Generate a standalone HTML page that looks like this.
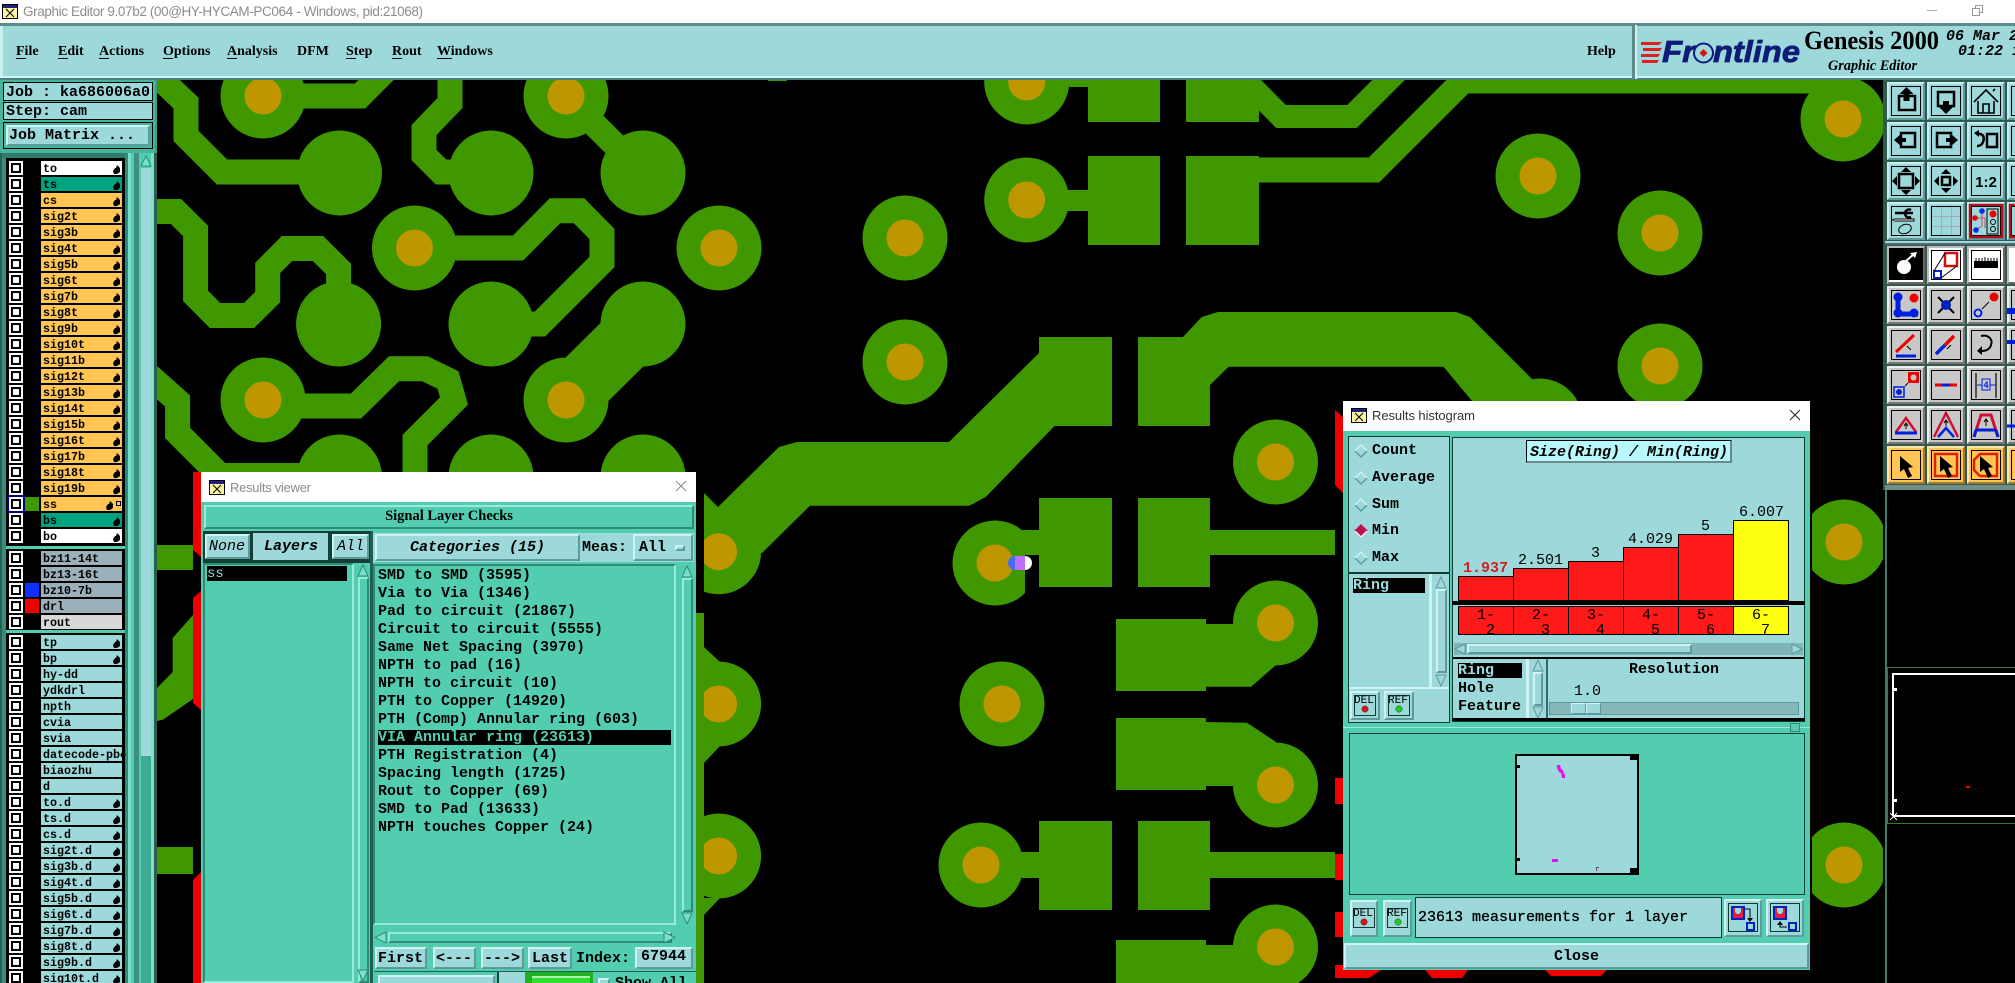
<!DOCTYPE html>
<html><head><meta charset="utf-8"><title>Graphic Editor</title>
<style>
html,body{margin:0;padding:0;background:#000;width:2015px;height:983px;overflow:hidden}
#r{position:relative;width:2015px;height:983px;overflow:hidden}
svg{position:absolute;left:0;top:0}
.a{position:absolute;box-sizing:border-box}
.t{position:absolute;white-space:pre;font:bold 15px/18px "Liberation Mono",monospace;color:#000;margin-top:1px}
.n{font-weight:normal}
.i{font-style:italic}
.bl{background:#9dd9da;border:2px solid;border-color:#cdf3f3 #5e9a9b #5e9a9b #cdf3f3}
.bt{background:#53cdaf;border:2px solid;border-color:#96ecd8 #2f8a76 #2f8a76 #96ecd8}
.sk{background:#53cdaf;border:2px solid;border-color:#2f8a76 #96ecd8 #96ecd8 #2f8a76}
.fl{background:#9dd9da}
.w{background:#fff}
.s{position:absolute;white-space:pre;font:bold 14.5px/18px "Liberation Serif",serif;color:#000}
svg text{white-space:pre}
.m{font:bold 11.67px "Liberation Mono",monospace;fill:#000}
.o{fill:#ffc655}.g{fill:#00a37f}.e{fill:#fff}.z{fill:#9cb0ba}.c{fill:#9dd9da}.q{fill:#d8d8d8}
.p{fill:#409800}.h{fill:#be9600}.r{fill:#ee0000}
.l{fill:none;stroke:#409800;stroke-linejoin:miter}
</style></head><body><div id="r">
<svg width="2015" height="983" viewBox="0 0 2015 983" xmlns="http://www.w3.org/2000/svg">
<defs>
<clipPath id="cv"><rect x="157" y="80" width="1726" height="903"/></clipPath>
<g id="v"><circle r="42.5" class="p"/><circle r="18.5" class="h"/></g>
<g id="cb"><rect x="9" width="14" height="14" fill="#fff"/><rect x="11" y="2" width="10" height="10" fill="#000"/><rect x="13" y="4" width="6" height="6" fill="#fff"/></g>
<path id="hd" d="M113 10l2-3h1l1-3 3 3v4l-3 2h-3z" fill="#000"/>
<g id="tb"><rect width="38" height="38" fill="#9dd9da"/><path d="M0 38V0h38l-2 2H2v34z" fill="#c9f0f0"/><path d="M38 0v38H0l2-2h34V2z" fill="#5e9a9b"/><rect x="4.5" y="4.5" width="29" height="29" fill="none" stroke="#000"/></g>
<g id="tg"><rect width="38" height="38" fill="#c8c8c8"/><path d="M0 38V0h38l-2 2H2v34z" fill="#eee"/><path d="M38 0v38H0l2-2h34V2z" fill="#777"/><rect x="4.5" y="4.5" width="29" height="29" fill="none" stroke="#000"/></g>
<g id="tw"><rect width="38" height="38" fill="#fff"/><path d="M38 0v38H0l2-2h34V2z" fill="#666"/><path d="M0 38V0h38l-2 2H2v34z" fill="#bbb"/><rect x="4" y="4" width="30" height="30" fill="#fff"/></g>
<g id="ty"><rect width="38" height="38" fill="#ffc655"/><path d="M0 38V0h38l-2 2H2v34z" fill="#ffe7a8"/><path d="M38 0v38H0l2-2h34V2z" fill="#a07a30"/><rect x="4.5" y="4.5" width="29" height="29" fill="none" stroke="#000"/></g>
<path id="ar" d="M13 10v16l4-3 4 9 4-2-4-8 5-1z" fill="#000"/>
</defs>
<rect width="2015" height="983" fill="#000"/>
<rect width="2015" height="23" fill="#fff"/>
<!-- PCB -->
<g clip-path="url(#cv)">
<g class="l" stroke-width="25">
<path d="M150 69L186 103V136L222 172H340"/>
<path d="M263 96H360L388 68"/>
<path d="M450 70V103L424 130V155L441 172H491"/>
<path d="M566 96L643 173"/>
<path d="M150 211.5H176L195.6 231V296L215 315.5H249L267.7 297V268L287 248.5H318L338.6 269V320"/>
<path d="M414 248H518L555 210.7H579L602 234V262L540 324H491"/>
<path d="M566 400L643 324" stroke-width="61"/>
<path d="M263 406H356L394 368.7H425L448 380L454 401L415 440V480"/>
<path d="M145 372L177.6 401V433L220 475.5H340"/>
<path d="M1240 75L1281 116.5H1352L1405 63.5" stroke-width="23"/>
<path d="M1259 170H1374L1463 81H1835L1843 119"/>
</g>
<g class="p">
<rect x="1088" y="60" width="72" height="62"/><rect x="1186" y="60" width="73" height="62"/>
<rect x="1088" y="156" width="72" height="89"/><rect x="1186" y="156" width="73" height="89"/>
<rect x="1039" y="337" width="73" height="89"/><rect x="1138" y="337" width="72" height="89"/>
<rect x="1039" y="498" width="73" height="89"/><rect x="1138" y="498" width="72" height="89"/>
<rect x="1116" y="619" width="90" height="72"/><rect x="1116" y="718" width="90" height="72"/>
<rect x="1039" y="821" width="73" height="89"/><rect x="1138" y="821" width="72" height="89"/>
<rect x="1116" y="940" width="90" height="60"/>
<rect x="1026" y="190" width="62" height="21"/><rect x="1026" y="60" width="62" height="27"/>
<rect x="1000" y="530" width="39" height="25"/><rect x="1210" y="530" width="125" height="25"/>
<rect x="981" y="852" width="60" height="26"/><rect x="1210" y="852" width="125" height="26"/>
<rect x="1206" y="945" width="50" height="40"/>
<polygon points="1206,624 1260,624 1276,665 1251,686.7 1206,686.7"/>
<polygon points="1206,722 1247,722.7 1276,742 1276,786 1206,786"/>
<polygon points="1039,353 949,442 797,442 779,447 718,507 704,493 700,560 762,553 810,505.7 969.5,505.7 986,496.7 1054.5,426 1112,426 1112,337 1039,337"/>
<polygon points="1183,337 1201.7,317 1218,312 1456,312 1470,317 1560,407 1477,407 1443.5,366.7 1228.6,366.7 1210,385"/>
<polygon points="704,647 720,662 720,746 704,763"/>
<polygon points="704,898 720,898 704,915"/>
<rect x="157" y="545" width="36" height="25"/>
<polygon points="157,688 172.7,672 172.7,638 193,615 193,699 163,719.6 157,721"/>
<rect x="157" y="847" width="36" height="27"/>
<rect x="768" y="80" width="19" height="1"/>
</g>
<use href="#v" x="263" y="96"/><use href="#v" x="566" y="96"/><use href="#v" x="414.5" y="248"/><use href="#v" x="719" y="248"/><use href="#v" x="263" y="400"/><use href="#v" x="566" y="400"/>
<use href="#v" x="1026.7" y="82"/><use href="#v" x="1026.7" y="200"/><use href="#v" x="905" y="238"/><use href="#v" x="905" y="362"/><use href="#v" x="718.6" y="551.7"/><use href="#v" x="995" y="563"/>
<use href="#v" x="1275.5" y="462"/><use href="#v" x="1275.5" y="623"/><use href="#v" x="1002" y="704"/><use href="#v" x="1275.5" y="785"/><use href="#v" x="981" y="865"/><use href="#v" x="718.6" y="704"/><use href="#v" x="718.6" y="856"/><use href="#v" x="1275.5" y="947"/>
<use href="#v" x="1843" y="119"/><use href="#v" x="1538" y="176"/><use href="#v" x="1660" y="233"/><use href="#v" x="1660" y="366"/><use href="#v" x="1844" y="542"/><use href="#v" x="1844" y="865"/><use href="#v" x="1540" y="421"/>
<g class="p">
<circle cx="339.5" cy="173" r="42.5"/><circle cx="491" cy="173" r="42.5"/><circle cx="643" cy="173" r="42.5"/>
<circle cx="338.6" cy="324" r="42.5"/><circle cx="491" cy="324" r="42.5"/><circle cx="643" cy="324" r="42.5"/>
<circle cx="339.5" cy="477" r="42.5"/><circle cx="491" cy="477" r="42.5"/><circle cx="643" cy="477" r="42.5"/>
</g>
<rect x="1025" y="555" width="14" height="55" fill="#000"/>
<path d="M1015 556a7 7 0 0 0 0 14z" fill="#4a6cf0"/><rect x="1015" y="556" width="10" height="14" fill="#bf6fff"/><path d="M1025 556a7 7 0 0 1 0 14z" fill="#fff"/>
<rect x="193" y="472" width="8" height="511" fill="#000"/>
<path d="M193 472h8v85l-8-7zM193 598l8-7v119l-8-7zM193 880l8-8v111h-8z" class="r"/>
<rect x="696" y="472" width="8" height="141" fill="#000"/><rect x="696" y="613" width="8" height="370" class="p"/>
<rect x="1335" y="400" width="8" height="583" fill="#000"/>
<path d="M1335 410l8 7v76l-8-8zM1335 778h8v26h-8zM1335 854h8v26h-8zM1335 912h8v25h-8zM1335 965h8v13h-8z" class="r"/>
<path d="M1343 970h38l-12 8h-26zM1425 970h43l-6 8h-30zM1545 970h62l-6 6h-50z" class="r"/>
<rect x="1810" y="400" width="2" height="583" fill="#000"/>
</g>
<!-- Left panel -->
<rect y="79" width="157" height="904" fill="#3f9c88"/>
<rect y="79" width="155" height="74" fill="#45b69c"/>
<rect y="153" width="155" height="5" fill="#2f7a6a"/>
<rect x="0" y="153" width="2" height="830" fill="#2c5f55"/>
<rect x="2" y="158" width="4" height="825" fill="#3e8a78"/>
<rect x="125" y="153" width="3" height="830" fill="#2f8a76"/>
<rect x="128" y="153" width="3" height="830" fill="#79e0cc"/>
<rect x="131" y="153" width="3" height="830" fill="#53cdaf"/>
<rect x="134" y="153" width="5" height="830" fill="#3f8f80"/>
<rect x="139" y="153" width="2" height="830" fill="#53cdaf"/>
<rect x="141" y="153" width="10" height="603" fill="#53cdaf"/>
<rect x="141" y="168" width="10" height="588" fill="#9dd9da"/>
<rect x="141" y="756" width="10" height="227" fill="#3faa92"/>
<rect x="151" y="153" width="3" height="830" fill="#79e0cc"/>
<rect x="154" y="153" width="3" height="830" fill="#2f5a50"/>
<path d="M146 156l5 10h-10z" fill="#79e0cc" stroke="#2f8a76"/>
<rect x="6" y="158" width="119" height="825" fill="#000"/>
<rect x="6" y="546" width="119" height="3" fill="#53cdaf"/><rect x="6" y="630" width="119" height="3" fill="#53cdaf"/>
<g>
<use href="#cb" y="161"/><rect class="e" x="41" y="161" width="81" height="14"/><text class="m" x="43" y="172">to</text><use href="#hd" y="161"/>
<use href="#cb" y="177"/><rect class="g" x="41" y="177" width="81" height="14"/><text class="m" x="43" y="188">ts</text><use href="#hd" y="177"/>
<use href="#cb" y="193"/><rect class="o" x="41" y="193" width="81" height="14"/><text class="m" x="43" y="204">cs</text><use href="#hd" y="193"/>
<use href="#cb" y="209"/><rect class="o" x="41" y="209" width="81" height="14"/><text class="m" x="43" y="220">sig2t</text><use href="#hd" y="209"/>
<use href="#cb" y="225"/><rect class="o" x="41" y="225" width="81" height="14"/><text class="m" x="43" y="236">sig3b</text><use href="#hd" y="225"/>
<use href="#cb" y="241"/><rect class="o" x="41" y="241" width="81" height="14"/><text class="m" x="43" y="252">sig4t</text><use href="#hd" y="241"/>
<use href="#cb" y="257"/><rect class="o" x="41" y="257" width="81" height="14"/><text class="m" x="43" y="268">sig5b</text><use href="#hd" y="257"/>
<use href="#cb" y="273"/><rect class="o" x="41" y="273" width="81" height="14"/><text class="m" x="43" y="284">sig6t</text><use href="#hd" y="273"/>
<use href="#cb" y="289"/><rect class="o" x="41" y="289" width="81" height="14"/><text class="m" x="43" y="300">sig7b</text><use href="#hd" y="289"/>
<use href="#cb" y="305"/><rect class="o" x="41" y="305" width="81" height="14"/><text class="m" x="43" y="316">sig8t</text><use href="#hd" y="305"/>
<use href="#cb" y="321"/><rect class="o" x="41" y="321" width="81" height="14"/><text class="m" x="43" y="332">sig9b</text><use href="#hd" y="321"/>
<use href="#cb" y="337"/><rect class="o" x="41" y="337" width="81" height="14"/><text class="m" x="43" y="348">sig10t</text><use href="#hd" y="337"/>
<use href="#cb" y="353"/><rect class="o" x="41" y="353" width="81" height="14"/><text class="m" x="43" y="364">sig11b</text><use href="#hd" y="353"/>
<use href="#cb" y="369"/><rect class="o" x="41" y="369" width="81" height="14"/><text class="m" x="43" y="380">sig12t</text><use href="#hd" y="369"/>
<use href="#cb" y="385"/><rect class="o" x="41" y="385" width="81" height="14"/><text class="m" x="43" y="396">sig13b</text><use href="#hd" y="385"/>
<use href="#cb" y="401"/><rect class="o" x="41" y="401" width="81" height="14"/><text class="m" x="43" y="412">sig14t</text><use href="#hd" y="401"/>
<use href="#cb" y="417"/><rect class="o" x="41" y="417" width="81" height="14"/><text class="m" x="43" y="428">sig15b</text><use href="#hd" y="417"/>
<use href="#cb" y="433"/><rect class="o" x="41" y="433" width="81" height="14"/><text class="m" x="43" y="444">sig16t</text><use href="#hd" y="433"/>
<use href="#cb" y="449"/><rect class="o" x="41" y="449" width="81" height="14"/><text class="m" x="43" y="460">sig17b</text><use href="#hd" y="449"/>
<use href="#cb" y="465"/><rect class="o" x="41" y="465" width="81" height="14"/><text class="m" x="43" y="476">sig18t</text><use href="#hd" y="465"/>
<use href="#cb" y="481"/><rect class="o" x="41" y="481" width="81" height="14"/><text class="m" x="43" y="492">sig19b</text><use href="#hd" y="481"/>
<rect x="7" y="495" width="18" height="18" fill="#000080"/><use href="#cb" y="497"/><rect x="25" y="497" width="14" height="14" class="p"/><rect class="o" x="41" y="497" width="81" height="14"/><text class="m" x="43" y="508">ss</text><use href="#hd" x="-7" y="497"/><rect x="116.5" y="501.5" width="4" height="4" fill="none" stroke="#000"/>
<use href="#cb" y="513"/><rect class="g" x="41" y="513" width="81" height="14"/><text class="m" x="43" y="524">bs</text><use href="#hd" y="513"/>
<use href="#cb" y="529"/><rect class="e" x="41" y="529" width="81" height="14"/><text class="m" x="43" y="540">bo</text><use href="#hd" y="529"/>
<use href="#cb" y="551"/><rect class="z" x="41" y="551" width="81" height="14"/><text class="m" x="43" y="562">bz11-14t</text>
<use href="#cb" y="567"/><rect class="z" x="41" y="567" width="81" height="14"/><text class="m" x="43" y="578">bz13-16t</text>
<use href="#cb" y="583"/><rect x="25" y="583" width="14" height="14" fill="#1030ff"/><rect class="z" x="41" y="583" width="81" height="14"/><text class="m" x="43" y="594">bz10-7b</text>
<use href="#cb" y="599"/><rect x="25" y="599" width="14" height="14" class="r"/><rect class="z" x="41" y="599" width="81" height="14"/><text class="m" x="43" y="610">drl</text>
<use href="#cb" y="615"/><rect class="q" x="41" y="615" width="81" height="14"/><text class="m" x="43" y="626">rout</text>
<use href="#cb" y="635"/><rect class="c" x="41" y="635" width="81" height="14"/><text class="m" x="43" y="646">tp</text><use href="#hd" y="635"/>
<use href="#cb" y="651"/><rect class="c" x="41" y="651" width="81" height="14"/><text class="m" x="43" y="662">bp</text><use href="#hd" y="651"/>
<use href="#cb" y="667"/><rect class="c" x="41" y="667" width="81" height="14"/><text class="m" x="43" y="678">hy-dd</text>
<use href="#cb" y="683"/><rect class="c" x="41" y="683" width="81" height="14"/><text class="m" x="43" y="694">ydkdrl</text>
<use href="#cb" y="699"/><rect class="c" x="41" y="699" width="81" height="14"/><text class="m" x="43" y="710">npth</text>
<use href="#cb" y="715"/><rect class="c" x="41" y="715" width="81" height="14"/><text class="m" x="43" y="726">cvia</text>
<use href="#cb" y="731"/><rect class="c" x="41" y="731" width="81" height="14"/><text class="m" x="43" y="742">svia</text>
<use href="#cb" y="747"/><rect class="c" x="41" y="747" width="81" height="14"/><text class="m" x="43" y="758">datecode-pb</text><circle cx="123" cy="755" r="2.5" fill="#000"/>
<use href="#cb" y="763"/><rect class="c" x="41" y="763" width="81" height="14"/><text class="m" x="43" y="774">biaozhu</text>
<use href="#cb" y="779"/><rect class="c" x="41" y="779" width="81" height="14"/><text class="m" x="43" y="790">d</text>
<use href="#cb" y="795"/><rect class="c" x="41" y="795" width="81" height="14"/><text class="m" x="43" y="806">to.d</text><use href="#hd" y="795"/>
<use href="#cb" y="811"/><rect class="c" x="41" y="811" width="81" height="14"/><text class="m" x="43" y="822">ts.d</text><use href="#hd" y="811"/>
<use href="#cb" y="827"/><rect class="c" x="41" y="827" width="81" height="14"/><text class="m" x="43" y="838">cs.d</text><use href="#hd" y="827"/>
<use href="#cb" y="843"/><rect class="c" x="41" y="843" width="81" height="14"/><text class="m" x="43" y="854">sig2t.d</text><use href="#hd" y="843"/>
<use href="#cb" y="859"/><rect class="c" x="41" y="859" width="81" height="14"/><text class="m" x="43" y="870">sig3b.d</text><use href="#hd" y="859"/>
<use href="#cb" y="875"/><rect class="c" x="41" y="875" width="81" height="14"/><text class="m" x="43" y="886">sig4t.d</text><use href="#hd" y="875"/>
<use href="#cb" y="891"/><rect class="c" x="41" y="891" width="81" height="14"/><text class="m" x="43" y="902">sig5b.d</text><use href="#hd" y="891"/>
<use href="#cb" y="907"/><rect class="c" x="41" y="907" width="81" height="14"/><text class="m" x="43" y="918">sig6t.d</text><use href="#hd" y="907"/>
<use href="#cb" y="923"/><rect class="c" x="41" y="923" width="81" height="14"/><text class="m" x="43" y="934">sig7b.d</text><use href="#hd" y="923"/>
<use href="#cb" y="939"/><rect class="c" x="41" y="939" width="81" height="14"/><text class="m" x="43" y="950">sig8t.d</text><use href="#hd" y="939"/>
<use href="#cb" y="955"/><rect class="c" x="41" y="955" width="81" height="14"/><text class="m" x="43" y="966">sig9b.d</text><use href="#hd" y="955"/>
<use href="#cb" y="971"/><rect class="c" x="41" y="971" width="81" height="14"/><text class="m" x="43" y="982">sig10t.d</text><use href="#hd" y="971"/>
</g>
<!-- Right toolbar -->
<rect x="1883" y="80" width="132" height="410" fill="#2f5a50"/>
<rect x="1885" y="241" width="130" height="2" fill="#9dd9da"/><rect x="1885" y="243" width="130" height="2" fill="#567"/>
<rect x="1885" y="485" width="130" height="5" fill="#6f8f88"/>
<rect x="1885" y="490" width="2" height="493" fill="#3d7a6a"/>
<g transform="translate(1887,82)"><use href="#tb"/><path d="M12 14h16v14H12z" fill="none" stroke="#000" stroke-width="2.5"/><path d="M19.5 5l7 7h-4v7h-6v-7h-4z"/></g>
<g transform="translate(1927,82)"><use href="#tb"/><path d="M11 10h16v14H11z" fill="none" stroke="#000" stroke-width="2.5"/><path d="M19 32l-7-7h4v-6h6v6h4z"/></g>
<g transform="translate(1967,82)"><use href="#tb"/><path d="M7 20L19 8l12 12M11 19v12h16V19M16 22h6v9h-6zM26 9l2-2" fill="none" stroke="#000" stroke-width="1.6"/></g>
<g transform="translate(2007,82)"><use href="#tb"/></g>
<g transform="translate(1887,122)"><use href="#tb"/><path d="M14 11h14v14H14z" fill="none" stroke="#000" stroke-width="2.5"/><path d="M7 18l7-6v4h5v4h-5v4z"/></g>
<g transform="translate(1927,122)"><use href="#tb"/><path d="M10 11h14v14H10z" fill="none" stroke="#000" stroke-width="2.5"/><path d="M31 18l-7-6v4h-5v4h5v4z"/></g>
<g transform="translate(1967,122)"><use href="#tb"/><path d="M20 12h10v13H20z" fill="none" stroke="#000" stroke-width="2.5"/><path d="M10 12c6-1 8 3 6 8-1 3-4 4-6 4" fill="none" stroke="#000" stroke-width="2.5"/><path d="M7 11l5-3v7z"/></g>
<g transform="translate(2007,122)"><use href="#tb"/></g>
<g transform="translate(1887,162)"><use href="#tb"/><path d="M12 12h14v14H12z" fill="none" stroke="#000" stroke-width="2.5"/><path d="M19 5l5 5H14zM19 33l5-5H14zM5 19l5-5v10zM33 19l-5-5v10z"/></g>
<g transform="translate(1927,162)"><use href="#tb"/><path d="M15 15h8v8h-8z" fill="none" stroke="#000" stroke-width="2.5"/><path d="M19 7l5 5H14zM19 31l5-5H14zM7 19l5-5v10zM31 19l-5-5v10z"/></g>
<g transform="translate(1967,162)"><use href="#tb"/><text x="19" y="25" text-anchor="middle" style="font:bold 15px 'Liberation Sans',sans-serif">1:2</text></g>
<g transform="translate(2007,162)"><use href="#tb"/></g>
<g transform="translate(1887,202)"><use href="#tb"/><path d="M8 11h18M24 8a4 4 0 1 0 0 7" fill="none" stroke="#000" stroke-width="2.5"/><path d="M8 17h19v2H8l-3-1z" fill="#fff" stroke="#000"/><ellipse cx="18" cy="27" rx="6.5" ry="4.5" fill="none" stroke="#000" transform="rotate(-20 18 27)"/></g>
<g transform="translate(1927,202)"><use href="#tb"/><path d="M14.5 5v28M24.5 5v28M5 14.5h28M5 24.5h28" stroke="#a9a9b5" fill="none"/></g>
<g transform="translate(1967,202)"><use href="#tb"/><rect x="3" y="3" width="32" height="32" fill="none" stroke="#b01020" stroke-width="2.5"/><rect x="20" y="7" width="11" height="25" fill="#9dd9da" stroke="#000"/><circle cx="26" cy="12" r="3.5" fill="#e00"/><circle cx="26" cy="20" r="2.5" fill="none" stroke="#000"/><circle cx="26" cy="27" r="2.5" fill="none" stroke="#000"/><path d="M15 9v15l-6 4M8 16h10v10" fill="none" stroke="#d04060"/><circle cx="15" cy="9" r="2.8" fill="#0030e0"/><circle cx="8" cy="16" r="2.8" fill="#e00"/><circle cx="9" cy="28" r="2.8" fill="#0030e0"/></g>
<g transform="translate(2007,202)"><use href="#tb"/><rect x="3" y="3" width="32" height="32" fill="none" stroke="#b01020" stroke-width="2.5"/></g>
<g transform="translate(1887,246)"><use href="#tw"/><rect x="2" y="2" width="34" height="32" fill="#000"/><circle cx="17" cy="21" r="7" fill="#fff"/><path d="M19 15l8-7" stroke="#fff" stroke-width="2"/><path d="M30 6l-7 1 5 5z" fill="#fff"/></g>
<g transform="translate(1927,246)"><use href="#tw"/><rect x="4.5" y="4.5" width="29" height="29" fill="none" stroke="#000"/><rect x="18" y="7" width="12" height="13" fill="#fff" stroke="#d01010" stroke-width="2.5"/><rect x="7" y="25" width="7" height="7" fill="#fff" stroke="#0020c0" stroke-width="2"/><path d="M7 25L18 7M14 32L30 20" stroke="#000" fill="none"/></g>
<g transform="translate(1967,246)"><use href="#tw"/><rect x="4.5" y="4.5" width="29" height="29" fill="none" stroke="#000"/><path d="M7 15h24v7H7z"/><path d="M9 15v-3M12 15v-3M15 15v-3M18 15v-4M21 15v-3M24 15v-3M27 15v-3M30 15v-3" stroke="#000"/></g>
<g transform="translate(2007,246)"><use href="#tw"/></g>
<g transform="translate(1887,286)"><use href="#tg"/><path d="M11 11v17h20" fill="none" stroke="#0020e0" stroke-width="5"/><circle cx="11" cy="11" r="4.5" fill="#0020e0"/><circle cx="11" cy="27" r="4.5" fill="#0020e0"/><circle cx="27" cy="27" r="4.5" fill="#0020e0"/><circle cx="27" cy="12" r="4.5" fill="#e00"/></g>
<g transform="translate(1927,286)"><use href="#tg"/><path d="M11 11l16 16M27 11L11 27" stroke="#000" stroke-width="2"/><circle cx="19" cy="19" r="5" fill="#0020c0"/></g>
<g transform="translate(1967,286)"><use href="#tg"/><circle cx="11" cy="27" r="3.5" fill="none" stroke="#0020e0" stroke-width="2"/><circle cx="27" cy="11" r="4.5" fill="#e00"/><path d="M15 23l7-7" stroke="#000"/></g>
<g transform="translate(2007,286)"><use href="#tg"/><rect x="0" y="22" width="8" height="6" fill="#0020e0"/></g>
<g transform="translate(1887,326)"><use href="#tg"/><path d="M9 26l18-17" stroke="#e00" stroke-width="3"/><path d="M9 30h20" stroke="#0020e0" stroke-width="3"/><path d="M20 20l4 4" stroke="#000"/></g>
<g transform="translate(1927,326)"><use href="#tg"/><path d="M9 28l9-9" stroke="#0020e0" stroke-width="3.5"/><path d="M18 19l9-9" stroke="#e00" stroke-width="3.5"/><path d="M20 23l4-4" stroke="#000"/></g>
<g transform="translate(1967,326)"><use href="#tg"/><path d="M14 10c8-2 12 4 10 9-1 4-5 6-9 6" fill="none" stroke="#000" stroke-width="2"/><path d="M15 20v9l-5-4z"/></g>
<g transform="translate(2007,326)"><use href="#tg"/><rect x="0" y="14" width="8" height="4" fill="#0020e0"/></g>
<g transform="translate(1887,366)"><use href="#tg"/><rect x="21" y="6" width="11" height="11" fill="#e00"/><circle cx="26.5" cy="11.5" r="3" fill="#c8c8c8"/><rect x="7" y="21" width="10" height="10" fill="none" stroke="#0020e0" stroke-width="1.5"/><circle cx="12" cy="26" r="3" fill="#0020e0"/><path d="M18 20l3-3" stroke="#000"/></g>
<g transform="translate(1927,366)"><use href="#tg"/><path d="M8 19h22" stroke="#e00" stroke-width="3"/><path d="M15 19h8" stroke="#0020e0" stroke-width="3"/></g>
<g transform="translate(1967,366)"><use href="#tg"/><path d="M9 7v25M29 7v25" stroke="#000" stroke-width="1.2"/><path d="M10 19h18" stroke="#0020e0"/><rect x="15" y="13" width="8" height="11" fill="#c8c8c8" stroke="#0020e0"/><text x="19" y="22" text-anchor="middle" fill="#0020e0" style="font:bold 9px 'Liberation Sans',sans-serif">4</text></g>
<g transform="translate(2007,366)"><use href="#tg"/></g>
<g transform="translate(1887,406)"><use href="#tg"/><path d="M9 26L19 12l10 14" fill="none" stroke="#d01030" stroke-width="2.5"/><path d="M8 27h22" stroke="#0020e0" stroke-width="3"/><path d="M19 23v-5m-2 2l2-3 2 3" stroke="#000" fill="none"/></g>
<g transform="translate(1927,406)"><use href="#tg"/><path d="M7 31L19 7l12 24" fill="none" stroke="#d01030" stroke-width="2.5"/><path d="M11 31l8-9 8 9" fill="none" stroke="#0020e0" stroke-width="2.5"/><path d="M19 20v-5m-2 2l2-3 2 3" stroke="#000" fill="none"/></g>
<g transform="translate(1967,406)"><use href="#tg"/><path d="M7 31L14 9h10l7 22" fill="none" stroke="#d01030" stroke-width="3"/><path d="M9 24h20M7 31l2-7M31 31l-2-7" fill="none" stroke="#0020e0" stroke-width="3"/><path d="M19 20v-6m-2 2l2-3 2 3" stroke="#000" fill="none"/></g>
<g transform="translate(2007,406)"><use href="#tg"/><path d="M0 20h8" stroke="#0020e0" stroke-width="3"/></g>
<g transform="translate(1887,446)"><use href="#ty"/><use href="#ar"/></g>
<g transform="translate(1927,446)"><use href="#ty"/><rect x="8" y="8" width="22" height="22" fill="none" stroke="#e02000" stroke-width="2.5"/><use href="#ar"/></g>
<g transform="translate(1967,446)"><use href="#ty"/><path d="M13 8h17v22H13l-6-6V14z" fill="none" stroke="#e02000" stroke-width="2.5"/><use href="#ar"/></g>
<g transform="translate(2007,446)"><use href="#ty"/></g>
<!-- Overview -->
<rect x="1887.5" y="667.5" width="140" height="156" fill="none" stroke="#3a7a2a"/>
<path d="M1893 816V674H2020M1893 816H2020" fill="none" stroke="#fff" stroke-width="2"/>
<rect x="1893" y="688" width="4" height="3" fill="#fff"/><rect x="1893" y="799" width="4" height="3" fill="#fff"/>
<path d="M1890 813l7 7M1897 813l-7 7" stroke="#fff"/><rect x="1966" y="786" width="4" height="2" fill="#ee0000"/>
<!-- Title bar -->
<rect x="2.5" y="4.5" width="15" height="14" fill="#fff7a0" stroke="#000"/><rect x="3" y="5" width="14" height="3" fill="#202080"/><path d="M6 9l8 8M14 9l-8 8" stroke="#000"/>
<text x="23" y="16" textLength="400" lengthAdjust="spacing" fill="#8c8c8c" style="font:13.5px 'Liberation Sans',sans-serif">Graphic Editor 9.07b2 (00@HY-HYCAM-PC064 - Windows, pid:21068)</text>
<path d="M1927 10.5h10" stroke="#aaa"/><path d="M1972.5 8.5h7v7h-7zM1975.5 8V5.500h7v7h-3" fill="none" stroke="#999"/>
<!-- Menu -->
<rect y="23" width="2015" height="3" fill="#5f8a8a"/>
<rect y="26" width="2015" height="52" fill="#9dd9da"/>
<rect y="26" width="3" height="52" fill="#c9f0f0"/><rect y="76" width="2015" height="2" fill="#cdf3f3"/><rect y="78" width="2015" height="2" fill="#4d7f7f"/>
<rect x="1632" y="25" width="3" height="54" fill="#5f8a8a"/><rect x="1635" y="25" width="2" height="54" fill="#cdf3f3"/>
<g style="font:bold 14px 'Liberation Serif',serif" fill="#000">
<text x="16" y="55">File</text><path d="M16 58.5h10M58 58.5h10M99 58.5h10M163 58.5h10M227 58.5h10M346 58.5h10M392 58.5h10M437 58.5h15" stroke="#000"/>
<text x="58" y="55">Edit</text><text x="99" y="55">Actions</text><text x="163" y="55">Options</text><text x="227" y="55">Analysis</text><text x="297" y="55">DFM</text><text x="346" y="55">Step</text><text x="392" y="55">Rout</text><text x="437" y="55">Windows</text><text x="1587" y="55">Help</text>
</g>
<path d="M1641 42h21l-3 3h-18zM1643 48h19l-2 3h-17zM1641 54h19l-2 3h-17zM1642 60h17l-2 3h-15z" fill="#e02020"/>
<g fill="#101a78" stroke="#101a78" stroke-width=".8" style="font:italic bold 31px 'Liberation Sans',sans-serif">
<text x="1662" y="62" textLength="33" lengthAdjust="spacingAndGlyphs">Fr</text><text x="1695" y="62" textLength="17" lengthAdjust="spacingAndGlyphs">o</text><text x="1713" y="62" textLength="87" lengthAdjust="spacingAndGlyphs">ntline</text>
</g>
<circle cx="1703.5" cy="53" r="9.5" fill="#9dd9da" stroke="#101a78" stroke-width="2"/>
<path d="M1703.5 49l4 4-4 4-4-4z" fill="#e01010"/>
<text x="1804" y="49" textLength="135" lengthAdjust="spacingAndGlyphs" fill="#000" style="font:bold 26px 'Liberation Serif',serif">Genesis 2000</text>
<text x="1828" y="70" textLength="89" lengthAdjust="spacingAndGlyphs" fill="#000" style="font:italic bold 15px 'Liberation Serif',serif">Graphic Editor</text>
<text x="1946" y="40" fill="#000" style="font:italic bold 15px 'Liberation Mono',monospace">06 Mar 2015</text>
<text x="1958" y="55" fill="#000" style="font:italic bold 15px 'Liberation Mono',monospace">01:22 1</text>
</svg>

<!-- Job panel -->
<div class="a fl" style="left:3px;top:82px;width:150px;height:19px;border:1px solid #000"></div>
<div class="a fl" style="left:3px;top:102px;width:150px;height:18px;border:1px solid #000"></div>
<div class="t" style="left:6px;top:83px">Job : ka686006a0</div>
<div class="t" style="left:6px;top:102px">Step: cam</div>
<div class="a" style="left:3px;top:122px;width:150px;height:27px;border:1px solid #000;background:#45b69c"></div>
<div class="a bl" style="left:6px;top:125px;width:144px;height:21px"></div>
<div class="t" style="left:9px;top:126px">Job Matrix ...</div>

<!-- Results viewer -->
<div class="a w" style="left:201px;top:472px;width:495px;height:30px"></div>
<div class="a" style="left:201px;top:502px;width:495px;height:481px;background:#53cdaf"></div>
<svg style="left:209px;top:480px" width="16" height="15"><rect x=".5" y=".5" width="15" height="14" fill="#fff7a0" stroke="#000"/><rect x="1" y="1" width="14" height="3" fill="#202080"/><path d="M4 5l8 8M12 5l-8 8" stroke="#000"/></svg>
<svg style="left:230px;top:478px" width="90" height="20"><text x="0" y="14" textLength="81" lengthAdjust="spacing" fill="#8c8c8c" style="font:13px 'Liberation Sans',sans-serif">Results viewer</text></svg>
<svg style="left:675px;top:480px" width="12" height="12"><path d="M1 1l10 10M11 1L1 11" stroke="#8a8a8a"/></svg>
<div class="a bt" style="left:204px;top:505px;width:490px;height:24px"></div>
<div class="s" style="left:204px;width:490px;top:507px;text-align:center">Signal Layer Checks</div>
<div class="a" style="left:203px;top:531px;width:168px;height:32px;background:#123f36"></div>
<div class="a bl" style="left:205px;top:534px;width:45px;height:25px"></div>
<div class="t n i" style="left:209px;top:537px">None</div>
<div class="a fl" style="left:253px;top:533px;width:75px;height:27px"></div>
<div class="t i" style="left:264px;top:537px">Layers</div>
<div class="a bl" style="left:332px;top:534px;width:37px;height:25px"></div>
<div class="t n i" style="left:337px;top:537px">All</div>
<div class="a fl" style="left:373px;top:533px;width:321px;height:29px"></div>
<div class="a bl" style="left:375px;top:534px;width:205px;height:27px"></div>
<div class="t i" style="left:410px;top:538px">Categories (15)</div>
<div class="t" style="left:582px;top:538px">Meas:</div>
<div class="a bl" style="left:633px;top:534px;width:60px;height:27px"></div>
<div class="t" style="left:639px;top:538px">All</div>
<div class="a bl" style="left:675px;top:545px;width:10px;height:6px"></div>
<div class="a sk" style="left:203px;top:563px;width:151px;height:420px"></div>
<div class="a" style="left:207px;top:566px;width:140px;height:15px;background:#000"></div>
<div class="t n" style="left:207px;top:564px;color:#9dd9da;font-size:14px">ss</div>
<div class="a" style="left:370px;top:531px;width:3px;height:452px;background:#1f5f52"></div>
<div class="a bt" style="left:358px;top:577px;width:11px;height:406px"></div>
<svg style="left:356px;top:563px" width="14" height="15"><path d="M7 2l5 11H2z" fill="#79e0cc" stroke="#2f8a76"/></svg>
<svg style="left:356px;top:968px" width="14" height="15"><path d="M7 13L12 2H2z" fill="#79e0cc" stroke="#2f8a76"/></svg>
<div class="a sk" style="left:373px;top:564px;width:303px;height:361px"></div>
<div class="t" style="left:378px;top:566px">SMD to SMD (3595)</div>
<div class="t" style="left:378px;top:584px">Via to Via (1346)</div>
<div class="t" style="left:378px;top:602px">Pad to circuit (21867)</div>
<div class="t" style="left:378px;top:620px">Circuit to circuit (5555)</div>
<div class="t" style="left:378px;top:638px">Same Net Spacing (3970)</div>
<div class="t" style="left:378px;top:656px">NPTH to pad (16)</div>
<div class="t" style="left:378px;top:674px">NPTH to circuit (10)</div>
<div class="t" style="left:378px;top:692px">PTH to Copper (14920)</div>
<div class="t" style="left:378px;top:710px">PTH (Comp) Annular ring (603)</div>
<div class="a" style="left:378px;top:730px;width:293px;height:15px;background:#000"></div>
<div class="t" style="left:378px;top:728px;color:#53cdaf">VIA Annular ring (23613)</div>
<div class="t" style="left:378px;top:746px">PTH Registration (4)</div>
<div class="t" style="left:378px;top:764px">Spacing length (1725)</div>
<div class="t" style="left:378px;top:782px">Rout to Copper (69)</div>
<div class="t" style="left:378px;top:800px">SMD to Pad (13633)</div>
<div class="t" style="left:378px;top:818px">NPTH touches Copper (24)</div>
<div class="a bt" style="left:682px;top:578px;width:11px;height:334px"></div>
<svg style="left:680px;top:565px" width="14" height="13"><path d="M7 1l5 11H2z" fill="#79e0cc" stroke="#2f8a76"/></svg>
<svg style="left:680px;top:912px" width="14" height="13"><path d="M7 12L12 1H2z" fill="#79e0cc" stroke="#2f8a76"/></svg>
<div class="a bt" style="left:388px;top:932px;width:284px;height:11px"></div>
<svg style="left:374px;top:931px" width="14" height="13"><path d="M1 6.5L12 1v11z" fill="#79e0cc" stroke="#2f8a76"/></svg>
<svg style="left:662px;top:931px" width="14" height="13"><path d="M13 6.5L2 1v11z" fill="#79e0cc" stroke="#2f8a76"/></svg>
<div class="a bl" style="left:375px;top:947px;width:52px;height:22px"></div><div class="t" style="left:378px;top:949px">First</div>
<div class="a bl" style="left:433px;top:947px;width:43px;height:22px"></div><div class="t" style="left:436px;top:949px">&lt;---</div>
<div class="a bl" style="left:481px;top:947px;width:43px;height:22px"></div><div class="t" style="left:484px;top:949px">---&gt;</div>
<div class="a bl" style="left:528px;top:947px;width:44px;height:22px"></div><div class="t" style="left:532px;top:949px">Last</div>
<div class="t" style="left:576px;top:949px">Index:</div>
<div class="a bl" style="left:635px;top:947px;width:58px;height:22px"></div><div class="t" style="left:641px;top:947px">67944</div>
<div class="a" style="left:374px;top:971px;width:322px;height:1px;background:#1f5f52"></div>
<div class="a bl" style="left:378px;top:975px;width:117px;height:10px"></div>
<div class="a" style="left:497px;top:972px;width:28px;height:11px;background:#9dd9da;border-left:2px solid #123f36"></div>
<div class="a" style="left:525px;top:972px;width:68px;height:11px;background:#22b022"></div>
<div class="a" style="left:532px;top:976px;width:58px;height:7px;background:#30e030;border-top:2px solid #b0f0b0"></div>
<div class="a bl" style="left:598px;top:978px;width:12px;height:8px"></div>
<div class="t" style="left:615px;top:974px">Show All</div>

<!-- Results histogram -->
<div class="a w" style="left:1343px;top:401px;width:467px;height:30px"></div>
<div class="a" style="left:1343px;top:431px;width:467px;height:539px;background:#53cdaf"></div>
<svg style="left:1351px;top:408px" width="16" height="15"><rect x=".5" y=".5" width="15" height="14" fill="#fff7a0" stroke="#000"/><rect x="1" y="1" width="14" height="3" fill="#202080"/><path d="M4 5l8 8M12 5l-8 8" stroke="#000"/></svg>
<svg style="left:1372px;top:406px" width="110" height="20"><text x="0" y="14" textLength="103" lengthAdjust="spacing" fill="#333" style="font:13px 'Liberation Sans',sans-serif">Results histogram</text></svg>
<svg style="left:1789px;top:409px" width="12" height="12"><path d="M1 1l10 10M11 1L1 11" stroke="#222"/></svg>
<div class="a fl" style="left:1348px;top:436px;width:102px;height:287px;border:1px solid #103a32"></div>
<div class="a" style="left:1349px;top:572px;width:100px;height:2px;background:#103a32"></div>
<svg style="left:1348px;top:440px" width="30" height="130">
<g><path d="M13 4l7 7-7 7-7-7z" fill="#9dd9da"/><path d="M6 11l7-7 7 7-2 0-5-5-5 5z" fill="#cdf3f3"/><path d="M6 11l7 7 7-7-2 0-5 5-5-5z" fill="#5e9a9b"/></g>
<g transform="translate(0,27)"><path d="M13 4l7 7-7 7-7-7z" fill="#9dd9da"/><path d="M6 11l7-7 7 7-2 0-5-5-5 5z" fill="#cdf3f3"/><path d="M6 11l7 7 7-7-2 0-5 5-5-5z" fill="#5e9a9b"/></g>
<g transform="translate(0,54)"><path d="M13 4l7 7-7 7-7-7z" fill="#9dd9da"/><path d="M6 11l7-7 7 7-2 0-5-5-5 5z" fill="#cdf3f3"/><path d="M6 11l7 7 7-7-2 0-5 5-5-5z" fill="#5e9a9b"/></g>
<g transform="translate(0,80)"><path d="M13 4l7 7-7 7-7-7z" fill="#c0104c"/><path d="M6 11l7 7 7-7-2 0-5 5-5-5z" fill="#e8fbfb"/></g>
<g transform="translate(0,107)"><path d="M13 4l7 7-7 7-7-7z" fill="#9dd9da"/><path d="M6 11l7-7 7 7-2 0-5-5-5 5z" fill="#cdf3f3"/><path d="M6 11l7 7 7-7-2 0-5 5-5-5z" fill="#5e9a9b"/></g>
</svg>
<div class="t" style="left:1372px;top:441px">Count</div>
<div class="t" style="left:1372px;top:468px">Average</div>
<div class="t" style="left:1372px;top:495px">Sum</div>
<div class="t" style="left:1372px;top:521px">Min</div>
<div class="t" style="left:1372px;top:548px">Max</div>
<div class="a" style="left:1353px;top:578px;width:72px;height:15px;background:#000"></div>
<div class="t" style="left:1353px;top:576px;color:#9dd9da">Ring</div>
<div class="a" style="left:1349px;top:687px;width:100px;height:2px;background:#cdf3f3"></div>
<div class="a" style="left:1429px;top:574px;width:3px;height:113px;background:#cdf3f3"></div>
<div class="a bl" style="left:1436px;top:589px;width:11px;height:84px"></div>
<svg style="left:1434px;top:576px" width="14" height="13"><path d="M7 1l5 11H2z" fill="#9dd9da" stroke="#5e9a9b"/></svg>
<svg style="left:1434px;top:674px" width="14" height="13"><path d="M7 12L12 1H2z" fill="#9dd9da" stroke="#5e9a9b"/></svg>
<div class="a bl" style="left:1350px;top:691px;width:30px;height:29px"></div>
<div class="a" style="left:1354px;top:695px;width:22px;height:21px;border:1px solid #103a32"></div>
<div class="t n" style="left:1354px;top:691px;font-size:11px">DEL</div>
<svg style="left:1361px;top:705px" width="8" height="8"><circle cx="4" cy="4" r="3.2" fill="#e01010" stroke="#333" stroke-width=".5"/></svg>
<div class="a bl" style="left:1384px;top:691px;width:30px;height:29px"></div>
<div class="a" style="left:1388px;top:695px;width:22px;height:21px;border:1px solid #103a32"></div>
<div class="t n" style="left:1388px;top:691px;font-size:11px">REF</div>
<svg style="left:1395px;top:705px" width="8" height="8"><circle cx="4" cy="4" r="3.2" fill="#20d020" stroke="#333" stroke-width=".5"/></svg>
<div class="a fl" style="left:1452px;top:437px;width:353px;height:285px;border:1px solid #103a32"></div>
<div class="a" style="left:1526px;top:440px;width:206px;height:23px;background:#b8f8fa;border:1px solid #000;border-right:2px solid #6a8a8a;border-bottom:2px solid #6a8a8a"></div>
<div class="t i" style="left:1530px;top:443px">Size(Ring) / Min(Ring)</div>
<svg style="left:1452px;top:500px" width="353" height="140">
<g stroke="#000" stroke-width="1">
<rect x="6.5" y="76.5" width="55" height="24" fill="#ff1a1a"/><rect x="61.5" y="68.5" width="55" height="32" fill="#ff1a1a"/><rect x="116.5" y="61.5" width="55" height="39" fill="#ff1a1a"/><rect x="171.5" y="47.5" width="55" height="53" fill="#ff1a1a"/><rect x="226.5" y="34.5" width="55" height="66" fill="#ff1a1a"/><rect x="281.5" y="20.5" width="55" height="80" fill="#ffff10"/>
<rect x="6.5" y="106.5" width="55" height="28" fill="#ff1a1a"/><rect x="61.5" y="106.5" width="55" height="28" fill="#ff1a1a"/><rect x="116.5" y="106.5" width="55" height="28" fill="#ff1a1a"/><rect x="171.5" y="106.5" width="55" height="28" fill="#ff1a1a"/><rect x="226.5" y="106.5" width="55" height="28" fill="#ff1a1a"/><rect x="281.5" y="106.5" width="55" height="28" fill="#ffff10"/>
</g>
<rect x="0" y="101" width="353" height="4" fill="#000"/>
</svg>
<div class="t" style="left:1463px;top:559px;color:#d02020">1.937</div>
<div class="t n" style="left:1518px;top:551px">2.501</div>
<div class="t n" style="left:1591px;top:544px">3</div>
<div class="t n" style="left:1628px;top:530px">4.029</div>
<div class="t n" style="left:1701px;top:517px">5</div>
<div class="t n" style="left:1739px;top:503px">6.007</div>
<div class="t n" style="left:1477px;top:606px">1-</div><div class="t n" style="left:1486px;top:621px;height:12px;overflow:hidden">2</div>
<div class="t n" style="left:1532px;top:606px">2-</div><div class="t n" style="left:1541px;top:621px;height:12px;overflow:hidden">3</div>
<div class="t n" style="left:1587px;top:606px">3-</div><div class="t n" style="left:1596px;top:621px;height:12px;overflow:hidden">4</div>
<div class="t n" style="left:1642px;top:606px">4-</div><div class="t n" style="left:1651px;top:621px;height:12px;overflow:hidden">5</div>
<div class="t n" style="left:1697px;top:606px">5-</div><div class="t n" style="left:1706px;top:621px;height:12px;overflow:hidden">6</div>
<div class="t n" style="left:1752px;top:606px">6-</div><div class="t n" style="left:1761px;top:621px;height:12px;overflow:hidden">7</div>
<div class="a" style="left:1454px;top:643px;width:349px;height:12px;background:#7fb5b6"></div>
<div class="a bl" style="left:1467px;top:644px;width:225px;height:10px"></div>
<svg style="left:1454px;top:643px" width="13" height="12"><path d="M1 6L11 1v10z" fill="#9dd9da" stroke="#5e9a9b"/></svg>
<svg style="left:1790px;top:643px" width="13" height="12"><path d="M12 6L2 1v10z" fill="#9dd9da" stroke="#5e9a9b"/></svg>
<div class="a" style="left:1453px;top:657px;width:351px;height:2px;background:#000"></div>
<div class="a" style="left:1458px;top:663px;width:64px;height:15px;background:#000"></div>
<div class="t" style="left:1458px;top:661px;color:#9dd9da">Ring</div>
<div class="t" style="left:1458px;top:679px">Hole</div>
<div class="t" style="left:1458px;top:697px">Feature</div>
<div class="a" style="left:1526px;top:659px;width:3px;height:59px;background:#cdf3f3"></div>
<div class="a bl" style="left:1533px;top:672px;width:10px;height:34px"></div>
<svg style="left:1531px;top:659px" width="14" height="13"><path d="M7 1l5 11H2z" fill="#9dd9da" stroke="#5e9a9b"/></svg>
<svg style="left:1531px;top:706px" width="14" height="13"><path d="M7 12L12 1H2z" fill="#9dd9da" stroke="#5e9a9b"/></svg>
<div class="a" style="left:1546px;top:659px;width:2px;height:59px;background:#2f6f6a"></div>
<div class="t" style="left:1629px;top:660px">Resolution</div>
<div class="t n" style="left:1574px;top:682px">1.0</div>
<div class="a" style="left:1549px;top:702px;width:250px;height:13px;background:#86b8b9;border:1px solid #5e9a9b"></div>
<div class="a bl" style="left:1571px;top:703px;width:15px;height:11px;border-width:1px"></div>
<div class="a bl" style="left:1586px;top:703px;width:15px;height:11px;border-width:1px"></div>
<div class="a" style="left:1452px;top:718px;width:353px;height:3px;background:#000"></div>
<div class="a" style="left:1343px;top:727px;width:467px;height:1px;background:#96ecd8"></div>
<div class="a" style="left:1790px;top:723px;width:10px;height:9px;background:#5cc8b0;border:1px solid #2f8a76"></div>
<div class="a" style="left:1349px;top:733px;width:456px;height:162px;background:#53cdaf;border:1px solid #103a32"></div>
<svg style="left:1510px;top:750px" width="135" height="130">
<rect x="6" y="5" width="122" height="119" fill="#9dd9da" stroke="#000" stroke-width="2"/>
<path d="M120 4h9v6h-9zM120 118h9v7h-9zM6 15h4v3H6zM6 108h4v3H6z"/>
<path d="M47 15h3l1 4 2 1 1 4 1 0v4h-3l-1-5-2-1-2-4z" fill="#e810e8"/><rect x="42" y="109" width="6" height="3" fill="#e810e8"/>
<path d="M86 117h3v1h-2v3h-1z" fill="#704070"/>
</svg>
<div class="a bl" style="left:1350px;top:900px;width:28px;height:37px"></div>
<div class="a" style="left:1353px;top:908px;width:22px;height:20px;border:1px solid #103a32"></div>
<div class="t n" style="left:1353px;top:904px;font-size:11px">DEL</div>
<svg style="left:1360px;top:918px" width="8" height="8"><circle cx="4" cy="4" r="3.2" fill="#e01010" stroke="#333" stroke-width=".5"/></svg>
<div class="a bl" style="left:1383px;top:900px;width:29px;height:37px"></div>
<div class="a" style="left:1387px;top:908px;width:21px;height:20px;border:1px solid #103a32"></div>
<div class="t n" style="left:1387px;top:904px;font-size:11px">REF</div>
<svg style="left:1394px;top:918px" width="8" height="8"><circle cx="4" cy="4" r="3.2" fill="#20d020" stroke="#333" stroke-width=".5"/></svg>
<div class="a fl" style="left:1415px;top:897px;width:307px;height:41px;border:1px solid #103a32"></div>
<div class="t" style="left:1418px;top:908px;font-weight:normal;-webkit-text-stroke:.3px #000">23613 measurements for 1 layer</div>
<div class="a bl" style="left:1724px;top:899px;width:38px;height:38px"></div>
<svg style="left:1728px;top:903px" width="30" height="30"><rect x=".5" y=".5" width="29" height="28" fill="#9dd9da" stroke="#103a32"/><rect x="4" y="4" width="12" height="12" fill="#e02040" stroke="#0020c0" stroke-width="2"/><path d="M7 5h6v4l-2 2H9L7 9z" fill="#9dd9da"/><rect x="19" y="20" width="7" height="7" fill="#9dd9da" stroke="#0020c0" stroke-width="2"/><path d="M17 6h5v10" fill="none" stroke="#000"/><path d="M22 19l-3-4h6z"/></svg>
<div class="a bl" style="left:1766px;top:899px;width:38px;height:38px"></div>
<svg style="left:1770px;top:903px" width="30" height="30"><rect x=".5" y=".5" width="29" height="28" fill="#9dd9da" stroke="#103a32"/><rect x="4" y="4" width="12" height="12" fill="#e02040" stroke="#0020c0" stroke-width="2"/><path d="M7 5h6v4l-2 2H9L7 9z" fill="#9dd9da"/><rect x="19" y="20" width="7" height="7" fill="#9dd9da" stroke="#0020c0" stroke-width="2"/><path d="M10 19v5h7" fill="none" stroke="#000"/><path d="M10 18l-3 4h6z"/></svg>
<div class="a bl" style="left:1344px;top:943px;width:465px;height:26px"></div>
<div class="t" style="left:1344px;width:465px;top:947px;text-align:center">Close</div>
</div></body></html>
